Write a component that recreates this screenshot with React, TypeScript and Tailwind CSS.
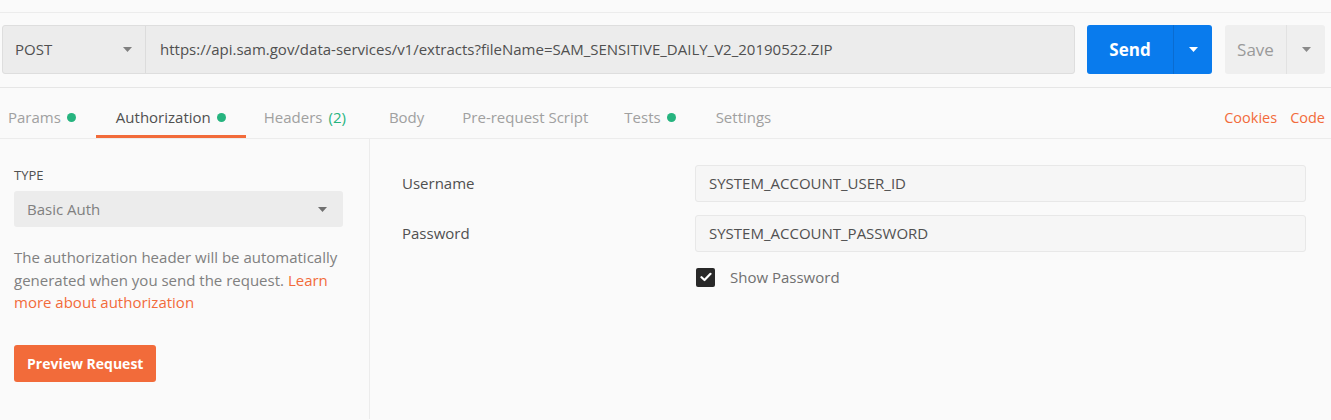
import React from "react";

const Caret = ({ className = "" }: { className?: string }) => (
  <svg width="9" height="5" viewBox="0 0 9 5" className={className}>
    <path d="M0 0 L9 0 L4.5 5 Z" fill="currentColor" />
  </svg>
);

const Dot = () => <span className="inline-block w-[9px] h-[9px] rounded-full bg-[#26b47f] ml-[6px]" />;

export default function App() {
  return (
    <div
      className="w-[1331px] h-[420px] bg-[#fafafa] overflow-hidden text-[15px] text-[#505050]"
      style={{ fontFamily: '"Open Sans", "Noto Sans", sans-serif' }}
    >
      <div className="h-[13px] border-b border-[#ececec]" />
      {/* request bar */}
      <div className="flex items-stretch h-[75px] pt-[12px] pb-[13px] pl-[2px] pr-[6px] border-b border-[#e6e6e6]">
        <div className="flex flex-1 rounded-[3px] border border-[#dedede] bg-[#ececec]">
          <div className="w-[143px] flex items-center justify-between pl-[12px] pr-[13px] border-r border-[#dcdcdc]">
            <span className="text-[15px] text-[#505050]">POST</span>
            <Caret className="text-[#808080]" />
          </div>
          <div className="flex-1 flex items-center pl-[14px] text-[15px] text-[#505050]">
            https://api.sam.gov/data-services/v1/extracts?fileName=SAM_SENSITIVE_DAILY_V2_20190522.ZIP
          </div>
        </div>
        <div className="ml-[12px] w-[125px] flex rounded-[3px] bg-[#097bed] text-white">
          <div className="flex-1 flex items-center justify-center font-bold text-[17px] border-r border-[#0a6cd1]">Send</div>
          <div className="w-[38px] flex items-center justify-center">
            <Caret className="text-white" />
          </div>
        </div>
        <div className="ml-[13px] w-[100px] flex rounded-[3px] bg-[#efefef]">
          <div className="flex-1 flex items-center justify-center text-[17px] text-[#9a9a9a] border-r border-[#e2e2e2]">Save</div>
          <div className="w-[38px] flex items-center justify-center">
            <Caret className="text-[#8a8a8a]" />
          </div>
        </div>
      </div>
      {/* tabs */}
      <div className="flex items-stretch h-[51px] border-b border-[#ececec]">
        <div className="flex ml-[-12px]">
          <div className="px-[20px] pt-[12px] border-b-[3px] border-transparent flex items-center text-[#a0a0a0]">Params<Dot /></div>
          <div className="px-[20px] pt-[12px] border-b-[3px] border-[#f26b3a] flex items-center text-[#505050]">Authorization<Dot /></div>
          <div className="px-[18px] pt-[12px] border-b-[3px] border-transparent flex items-center text-[#a0a0a0]">Headers<span className="ml-[6px] text-[#26b47f]">(2)</span></div>
          <div className="pl-[25px] pr-[22px] pt-[12px] border-b-[3px] border-transparent flex items-center text-[#a0a0a0]">Body</div>
          <div className="px-[16px] pt-[12px] border-b-[3px] border-transparent flex items-center text-[#a0a0a0]">Pre-request Script</div>
          <div className="px-[20px] pt-[12px] border-b-[3px] border-transparent flex items-center text-[#a0a0a0]">Tests<Dot /></div>
          <div className="px-[20px] pt-[12px] border-b-[3px] border-transparent flex items-center text-[#a0a0a0]">Settings</div>
        </div>
        <div className="ml-auto flex items-center gap-[13px] pr-[6px] pt-[9px] text-[14.5px] text-[#f26b3a]">
          <span>Cookies</span>
          <span>Code</span>
        </div>
      </div>
      {/* body */}
      <div className="flex h-[280px]">
        <div className="w-[370px] border-r border-[#ececec] pl-[14px] pr-[26px] pt-[29px]">
          <div className="text-[13px] text-[#505050] font-medium leading-[14px]">TYPE</div>
          <div className="mt-[9px] h-[36px] rounded-[3px] bg-[#ececec] flex items-center justify-between pl-[13px] pr-[16px] text-[#808080]">
            <span>Basic Auth</span>
            <Caret className="text-[#707070]" />
          </div>
          <p className="mt-[19px] leading-[22.5px] text-[#808080]">
            The authorization header will be automatically generated when you send the request.{" "}
            <span className="text-[#f26b3a]">Learn more about authorization</span>
          </p>
          <button className="mt-[31px] h-[37px] px-[13px] rounded-[3px] bg-[#f26b3a] text-white font-bold text-[14px]">
            Preview Request
          </button>
        </div>
        <div className="flex-1 pt-[26px] pr-[25px]">
          <div className="flex items-center h-[37px]">
            <div className="w-[325px] pl-[32px]">Username</div>
            <div className="flex-1 h-full rounded-[3px] border border-[#e8e8e8] bg-[#f6f6f6] flex items-center pl-[13px]">
              SYSTEM_ACCOUNT_USER_ID
            </div>
          </div>
          <div className="flex items-center h-[37px] mt-[13px]">
            <div className="w-[325px] pl-[32px]">Password</div>
            <div className="flex-1 h-full rounded-[3px] border border-[#e8e8e8] bg-[#f6f6f6] flex items-center pl-[13px]">
              SYSTEM_ACCOUNT_PASSWORD
            </div>
          </div>
          <div className="flex items-center mt-[14px] ml-[326px]">
            <span className="w-[19px] h-[19px] rounded-[2px] bg-[#282828] flex items-center justify-center">
              <svg width="12" height="10" viewBox="0 0 12 10">
                <path d="M1.5 5.2 L4.5 8 L10.5 1.8" stroke="white" strokeWidth="2.2" fill="none" strokeLinecap="round" strokeLinejoin="round" />
              </svg>
            </span>
            <span className="ml-[15px] text-[#707070]">Show Password</span>
          </div>
        </div>
      </div>
    </div>
  );
}
